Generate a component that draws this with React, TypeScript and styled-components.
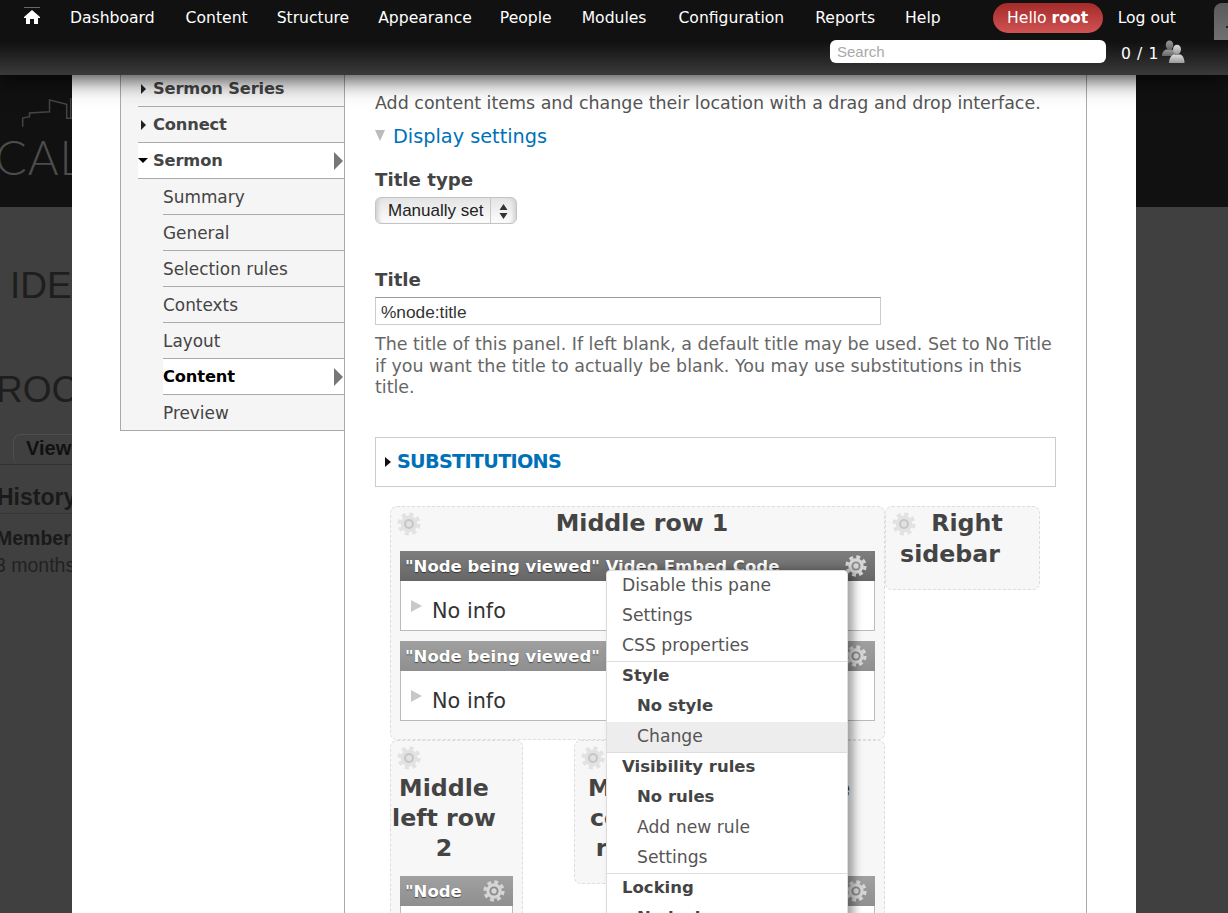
import React from "react";
import styled, { createGlobalStyle } from "styled-components";

const Global = createGlobalStyle`
  html, body { margin: 0; padding: 0; background: #404040; }
  * { box-sizing: border-box; }
`;
const FONT = `"DejaVu Sans", "Liberation Sans", sans-serif`;
const HELV = `"Liberation Sans", Arial, sans-serif`;

const Page = styled.div`
  width: 1228px; height: 913px; overflow: hidden; position: relative;
  font-family: ${FONT}; background: #404040;
`;
const Toolbar = styled.header`
  position: relative; z-index: 5; height: 75px; padding: 0 0 0 23px;
  background: linear-gradient(#111 0, #111 42px, #3a3a3a 75px);
  box-shadow: 0 3px 22px rgba(0,0,0,.85);
  color: #fff;
`;
const CornerTab = styled.div`
  position: absolute; right: 0; top: 3px; width: 14px; height: 37px;
  border-radius: 8px 0 0 0; background: linear-gradient(#5a5a5a, #707070);
  &::after { content: ""; position: absolute; right: 0; top: 23px; width: 2px; height: 2px; background: #222; }
`;
const TopRow = styled.nav`
  display: flex; align-items: center; height: 35px; font-size: 15.6px;
`;
const HomeLink = styled.a`
  display: block; width: 18px; height: 18px; margin-right: 29px; margin-top: -3px;
`;
const NavLink = styled.a<{ $gap?: number }>`
  margin-right: ${p => p.$gap ?? 31}px; white-space: nowrap; color: #fff;
`;
const HelloPill = styled.a`
  display: flex; align-items: center; justify-content: center;
  width: 110px; height: 30px; margin-left: 52px; margin-right: 15px;
  border-radius: 15px; background: linear-gradient(#a52a2a, #cf5353); white-space: nowrap;
  b { margin-left: 5px; }
`;
const SecondRow = styled.div`
  display: flex; align-items: center; height: 24px; margin-top: 4px; padding-left: 807px;
`;
const Search = styled.div`
  width: 276px; height: 23px; border-radius: 6px; background: #fff; color: #a9a9a9;
  font-family: ${HELV}; font-size: 15px; line-height: 24px; padding-left: 7px;
`;
const Count = styled.div`
  display: flex; align-items: center; margin-left: 15px; padding-top: 5px; font-size: 15.6px; letter-spacing: .6px;
  svg { margin-left: 2px; margin-top: -4px; }
`;
const Body = styled.div`
  display: grid; grid-template-columns: 72px 1064px 92px; height: 838px;
`;
const Backdrop = styled.aside`
  position: relative; overflow: hidden; color: #1a1a1a; font-family: ${HELV};
`;
const BackHeader = styled.div`
  height: 132px; background: #111; overflow: hidden; color: #555;
  display: flex; flex-direction: column; position: relative;
`;
const CityMark = styled.svg`
  display: block; margin: 20px 0 0 0; flex: none;
`;
const CalWord = styled.div`
  font-family: Lato, ${HELV}; font-size: 47px; font-weight: 300; line-height: 47px; margin: -3px 0 0 -5px; color: #4c4c4c;
  white-space: nowrap; letter-spacing: 1px;
`;
const BackTitle = styled.div<{ $top: number; $left: number }>`
  margin-top: ${p => p.$top}px; margin-left: ${p => p.$left}px; font-size: 37px; line-height: 42px;
  white-space: nowrap; color: #1e1e1e;
`;
const BackTab = styled.div`
  margin-top: 23px; margin-left: 13px; height: 31px; width: 90px; padding-left: 12px;
  border: 1px solid #4e4e4e; border-bottom: 0; border-radius: 8px 0 0 8px;
  font: bold 20px/27px ${HELV}; white-space: nowrap; color: #111;
`;
const BackRule = styled.div`
  border-top: 1px solid #333;
  margin-top: -1px;
`;
const BackHeading = styled.div`
  margin: 18px 0 0 -3px; font: bold 23px/29px ${HELV}; white-space: nowrap; color: #1a1a1a;
  padding-bottom: 1px; border-bottom: 1px solid #363636; width: 100px;
`;
const BackStrong = styled.div`
  margin: 12px 0 0 -4px; font: bold 19.5px/24px ${HELV}; white-space: nowrap;
`;
const BackText = styled.div`
  margin: 3px 0 0 -5px; font: 19.5px/24px ${HELV}; white-space: nowrap; color: #222;
`;
const Modal = styled.main`
  background: #fff; display: grid; grid-template-columns: 48px 224px 743px 49px; overflow: hidden;
`;
const Gutter = styled.div``;
const Sidebar = styled.ul`
  list-style: none; margin: 0; padding: 0; height: 356px; background: #f5f5f5;
  border-left: 1px solid #aaa; border-bottom: 1px solid #aaa; padding-left: 17px;
`;
const SideItem = styled.li<{ $sub?: boolean; $active?: boolean; $strong?: boolean }>`
  position: relative; height: 36px; padding-top: ${p => p.$sub ? 7 : 0}px;
  margin-left: ${p => p.$sub ? 25 : 0}px;
  padding-left: ${p => p.$sub ? 0 : 15}px;
  border-bottom: 1px solid #aaa;
  background: ${p => p.$active ? "#fff" : "transparent"};
  color: ${p => p.$strong && p.$active && p.$sub ? "#000" : "#444"};
  font-size: ${p => p.$strong ? 16.3 : 16.9}px; line-height: 26px; font-weight: ${p => p.$strong ? 700 : 400};
  letter-spacing: ${p => p.$strong ? "-.15px" : "0"};
  white-space: nowrap;
  &:first-child { height: 32px; span { padding-top: 1px; } i { top: 9px; } }
  &:last-child { border-bottom: 0; }
`;
const SubLabel = styled.span`
  display: block; line-height: 22px;
`;
const TopLabel = styled.span`
  display: block; padding-top: 5px;
`;
const Caret = styled.i<{ $open?: boolean }>`
  position: absolute; left: ${p => p.$open ? 0 : 3}px; top: ${p => p.$open ? 15 : 13}px;
  width: 0; height: 0; border-style: solid;
  ${p => p.$open
    ? "border-width: 5px 5px 0 5px; border-color: #000 transparent transparent;"
    : "border-width: 5px 0 5px 5px; border-color: transparent transparent transparent #222;"}
`;
const ActiveArrow = styled.i`
  position: absolute; right: 1px; top: 9px; width: 0; height: 0; border-style: solid;
  border-width: 9px 0 9px 9px; border-color: transparent transparent transparent #777;
`;
const Content = styled.section`
  position: relative; background: #fff; border-left: 1px solid #aaa; border-right: 1px solid #aaa;
  padding: 0 30px; color: #555; height: 900px;
`;
const Intro = styled.p`
  margin: 15px 0 0; font-size: 17.45px; line-height: 26px; white-space: nowrap; color: #555;
`;
const DisplayRow = styled.div`
  display: flex; align-items: center; margin-top: 6px; height: 28px;
  a { color: #0071b8; font-size: 19.3px; margin-left: 8px; }
`;
const GrayDown = styled.i`
  width: 0; height: 0; border-style: solid; border-width: 11px 5.5px 0 5.5px;
  border-color: #bbb transparent transparent; margin-top: -2px;
`;
const FieldLabel = styled.label<{ $top: number }>`
  display: block; margin-top: ${p => p.$top}px; font-size: 18.2px; font-weight: 700; line-height: 28px; color: #444;
`;
const SelectBox = styled.div`
  display: flex; width: 142px; height: 27px; margin-top: 3px; border-radius: 6px;
  background: linear-gradient(#e4e4e4, #fdfdfd);
  border: 1px solid #c4c4c4; box-shadow: inset 5px 0 4px -3px #ccc, inset -5px 0 4px -3px #ccc;
  font: 17px/25px ${HELV}; color: #222;
  span { width: 115px; padding-left: 12px; white-space: nowrap; border-right: 1px solid #c8c8c8; line-height: 25px; }
  svg { margin: 6px 0 0 7px; }
`;
const TitleInput = styled.div`
  width: 506px; height: 28px; margin-top: 3px; border: 1px solid #ccc; border-top-color: #999;
  padding-left: 5px; font: 17.3px/28px ${HELV}; color: #333;
`;
const Help = styled.p`
  margin: 9px 0 0; width: 680px; font-size: 17.45px; line-height: 21.6px; color: #666;
`;
const Fieldset = styled.div`
  display: flex; align-items: center; margin-top: 38px; width: 681px; height: 50px;
  border: 1px solid #ccc; padding-left: 9px;
  a { color: #0071b8; font-size: 19.2px; font-weight: 700; margin: -1px 0 0 6px; letter-spacing: -.7px; }
`;
const SmallCaret = styled.i`
  width: 0; height: 0; border-style: solid; border-width: 5px 0 5px 6px;
  border-color: transparent transparent transparent #111;
`;
const Canvas = styled.div`
  width: 650px; margin: 19px 0 0 15px; font-weight: 700; color: #444;
`;
const CanvasRow = styled.div`
  display: flex;
`;
const Region = styled.div<{ $w: number; $h?: number; $ml?: number }>`
  flex: none; width: ${p => p.$w}px; ${p => p.$h ? `height: ${p.$h}px;` : ""}
  margin-left: ${p => p.$ml ?? 0}px;
  padding: 0 9px; background: #f7f7f7; border: 1px dashed #ddd; border-radius: 7px;
`;
const RegionHead = styled.div`
  margin: 0 16px 0 -9px; padding-top: 1px;
`;
const RegionGear = styled.span`
  float: left; width: 34px; height: 31px; padding: 4px 0 0 6px; line-height: 0;
`;
const RegionTitle = styled.h2`
  margin: 0; text-align: center; font-size: 23.7px; line-height: 30px; font-weight: 700; color: #444;
`;
const Pane = styled.div<{ $top: number }>`
  clear: both; margin-top: ${p => p.$top}px; background: #fff; border: 1px solid #bbb; border-top: 0;
  height: 80px;
`;
const PaneHead = styled.div<{ $dim?: boolean }>`
  position: relative; height: 30px; margin: 0 -1px;
  background: ${p => p.$dim ? "linear-gradient(#a0a0a0,#8f8f8f)" : "linear-gradient(#7e7e7e,#666)"};
  color: #fff; font-size: 16.5px; line-height: 31px; font-weight: 700; white-space: nowrap; overflow: hidden;
  padding-left: 5px; text-shadow: 0 1px 1px rgba(0,0,0,.5);
`;
const PaneGear = styled.span`
  position: absolute; right: 8px; top: 4px; line-height: 0;
`;
const PaneBody = styled.div`
  display: flex; align-items: center; height: 49px; padding: 11px 0 0 10px;
  font-size: 20.8px; font-weight: 400; color: #333;
  i { width: 0; height: 0; border-style: solid; border-width: 6px 0 6px 11px;
      border-color: transparent transparent transparent #c8c8c8; margin: -9px 10px 0 0; }
`;
const Menu = styled.div`
  position: absolute; z-index: 3; left: 261px; top: 495px; width: 242px; height: 360px;
  background: #fff; border: 1px solid #ddd; border-radius: 4px 4px 0 0;
  box-shadow: 6px 0 8px rgba(0,0,0,.35);
  font-size: 17.2px; color: #555; font-weight: 400;
`;
const MenuGroup = styled.ul`
  list-style: none; margin: 0; padding: 0; border-bottom: 1px solid #ddd;
`;
const MenuItem = styled.li<{ $indent?: boolean; $bold?: boolean; $hover?: boolean }>`
  height: 30px; line-height: ${p => p.$bold ? 27 : 29}px; padding-left: ${p => p.$indent ? 30 : 15}px;
  font-weight: ${p => p.$bold ? 700 : 400}; white-space: nowrap;
  font-size: ${p => p.$bold ? 16.5 : 17.2}px;
  background: ${p => p.$hover ? "#ededed" : "transparent"};
  color: ${p => p.$bold ? "#444" : "#555"};
`;

const Gear = ({ size = 22, base = "#d6d6d6", inner = "#8c8c8c" }: { size?: number; base?: string; inner?: string }) => (
  <svg width={size} height={size} viewBox="0 0 24 24" aria-hidden>
    <circle cx="12" cy="12" r="8.4" fill={base} />
    <circle cx="12" cy="12" r="9.8" fill="none" stroke={base} strokeWidth="3.6" strokeDasharray="4.2 3.5" />
    <circle cx="12" cy="12" r="5" fill={inner} />
    <circle cx="12" cy="12" r="2.9" fill={base} />
  </svg>
);
const SoftGear = () => <Gear size={24} base="#e2e2e2" inner="#c6c6c6" />;

const HomeIcon = () => (
  <svg width="18" height="18" viewBox="0 0 18 18" aria-hidden>
    <path d="M1 0.5h16" stroke="#666" strokeWidth="1" />
    <path fill="#fff" d="M9 3 L1 10 L1 11 L3 11 L3 17 L7 17 L7 12 L11 12 L11 17 L15 17 L15 11 L17 11 L17 10 Z" />
  </svg>
);
const PeopleIcon = () => (
  <svg width="24" height="24" viewBox="0 0 24 24" aria-hidden>
    <defs>
      <linearGradient id="pb" x1="0" y1="0" x2="0" y2="1"><stop offset="0" stopColor="#999" /><stop offset="1" stopColor="#666" /></linearGradient>
      <linearGradient id="pf" x1="0" y1="0" x2="0" y2="1"><stop offset="0" stopColor="#ddd" /><stop offset="1" stopColor="#999" /></linearGradient>
    </defs>
    <ellipse cx="8.500" cy="5" rx="3.800" ry="4.500" fill="url(#pb)" />
    <path d="M1 16c0-4 2.500-6 4-6.500h6c1.500.5 3 2 3 4v2.500z" fill="url(#pb)" />
    <ellipse cx="16" cy="9.500" rx="4" ry="4.800" fill="url(#pf)" />
    <path d="M8 23c0-5 2.500-7.500 4.500-8.500h7c2 1 4 3.500 4 8.500z" fill="url(#pf)" />
  </svg>
);
const Updown = () => (
  <svg width="11" height="15" viewBox="0 0 11 15" aria-hidden>
    <path d="M5.500 0 L9.500 6 H1.500Z M1.500 9 H9.500 L5.500 15Z" fill="#333" />
  </svg>
);

const Backdrop1 = ({ left }: { left: boolean }) => (
  <Backdrop>
    <BackHeader>
      {left && (
        <>
          <CityMark width="72" height="42" viewBox="0 95 72 42" fill="none" stroke="#444" strokeWidth="1.500">
            <path d="M22.700 126.700 V118 L29.500 116.700 V113 L49.500 111.700 V100 L66.700 104.300 V118.300 H72 M70.700 98 V118" />
          </CityMark>
          <CalWord>CAL</CalWord>
        </>
      )}
    </BackHeader>
    {left && (
      <>
        <BackTitle $top={58} $left={10}>IDE</BackTitle>
        <BackTitle $top={62} $left={-4}>ROC</BackTitle>
        <BackTab>View</BackTab>
        <BackRule />
        <BackHeading>History</BackHeading>
        <BackStrong>Member</BackStrong>
        <BackText>3 months</BackText>
      </>
    )}
  </Backdrop>
);

const RegionHeader = ({ title }: { title: string }) => (
  <RegionHead>
    <RegionGear><SoftGear /></RegionGear>
    <RegionTitle>{title}</RegionTitle>
  </RegionHead>
);

export default function App() {
  return (
    <Page>
      <Global />
      <Toolbar>
        <TopRow>
          <HomeLink><HomeIcon /></HomeLink>
          <NavLink $gap={31}>Dashboard</NavLink>
          <NavLink $gap={29}>Content</NavLink>
          <NavLink $gap={29}>Structure</NavLink>
          <NavLink $gap={28}>Appearance</NavLink>
          <NavLink $gap={30}>People</NavLink>
          <NavLink $gap={32}>Modules</NavLink>
          <NavLink>Configuration</NavLink>
          <NavLink $gap={30}>Reports</NavLink>
          <NavLink $gap={0}>Help</NavLink>
          <HelloPill>Hello <b>root</b></HelloPill>
          <NavLink $gap={0}>Log out</NavLink>
        </TopRow>
        <SecondRow>
          <Search>Search</Search>
          <Count>0 / 1<PeopleIcon /></Count>
        </SecondRow>
        <CornerTab />
      </Toolbar>
      <Body>
        <Backdrop1 left />
        <Modal>
          <Gutter />
          <Sidebar>
            <SideItem $strong><Caret /><TopLabel>Sermon Series</TopLabel></SideItem>
            <SideItem $strong><Caret /><TopLabel>Connect</TopLabel></SideItem>
            <SideItem $strong $active><Caret $open /><TopLabel>Sermon</TopLabel><ActiveArrow /></SideItem>
            <SideItem $sub><SubLabel>Summary</SubLabel></SideItem>
            <SideItem $sub><SubLabel>General</SubLabel></SideItem>
            <SideItem $sub><SubLabel>Selection rules</SubLabel></SideItem>
            <SideItem $sub><SubLabel>Contexts</SubLabel></SideItem>
            <SideItem $sub><SubLabel>Layout</SubLabel></SideItem>
            <SideItem $sub $active $strong><SubLabel>Content</SubLabel><ActiveArrow /></SideItem>
            <SideItem $sub><SubLabel>Preview</SubLabel></SideItem>
          </Sidebar>
          <Content>
            <Intro>Add content items and change their location with a drag and drop interface.</Intro>
            <DisplayRow><GrayDown /><a>Display settings</a></DisplayRow>
            <FieldLabel $top={16}>Title type</FieldLabel>
            <SelectBox><span>Manually set</span><Updown /></SelectBox>
            <FieldLabel $top={42}>Title</FieldLabel>
            <TitleInput>%node:title</TitleInput>
            <Help>The title of this panel. If left blank, a default title may be used. Set to No Title if you want the title to actually be blank. You may use substitutions in this title.</Help>
            <Fieldset><SmallCaret /><a>SUBSTITUTIONS</a></Fieldset>
            <Canvas>
              <CanvasRow>
                <Region $w={495} $h={234}>
                  <RegionHeader title="Middle row 1" />
                  <Pane $top={13}>
                    <PaneHead>"Node being viewed" Video Embed Code<PaneGear><Gear /></PaneGear></PaneHead>
                    <PaneBody><i />No info</PaneBody>
                  </Pane>
                  <Pane $top={10}>
                    <PaneHead $dim>"Node being viewed" Audio Embed Code<PaneGear><Gear /></PaneGear></PaneHead>
                    <PaneBody><i />No info</PaneBody>
                  </Pane>
                </Region>
                <Region $w={155} $h={84}>
                  <RegionHeader title="Right sidebar" />
                </Region>
              </CanvasRow>
              <CanvasRow>
                <Region $w={133} $h={260}>
                  <RegionHeader title="Middle left row 2" />
                  <Pane $top={13}>
                    <PaneHead $dim>"Node<PaneGear><Gear /></PaneGear></PaneHead>
                  </Pane>
                </Region>
                <Region $w={143} $h={144} $ml={51}>
                  <RegionHeader title="Middle center row 2" />
                </Region>
                <Region $w={134} $h={260} $ml={34}>
                  <RegionHeader title="Middle right row 2" />
                  <Pane $top={13}>
                    <PaneHead $dim>"Node<PaneGear><Gear /></PaneGear></PaneHead>
                  </Pane>
                </Region>
              </CanvasRow>
            </Canvas>
            <Menu>
              <MenuGroup>
                <MenuItem>Disable this pane</MenuItem>
                <MenuItem>Settings</MenuItem>
                <MenuItem>CSS properties</MenuItem>
              </MenuGroup>
              <MenuGroup>
                <MenuItem $bold>Style</MenuItem>
                <MenuItem $indent $bold>No style</MenuItem>
                <MenuItem $indent $hover>Change</MenuItem>
              </MenuGroup>
              <MenuGroup>
                <MenuItem $bold>Visibility rules</MenuItem>
                <MenuItem $indent $bold>No rules</MenuItem>
                <MenuItem $indent>Add new rule</MenuItem>
                <MenuItem $indent>Settings</MenuItem>
              </MenuGroup>
              <MenuGroup>
                <MenuItem $bold>Locking</MenuItem>
                <MenuItem $indent $bold>No lock</MenuItem>
              </MenuGroup>
            </Menu>
          </Content>
          <Gutter />
        </Modal>
        <Backdrop1 left={false} />
      </Body>
    </Page>
  );
}
